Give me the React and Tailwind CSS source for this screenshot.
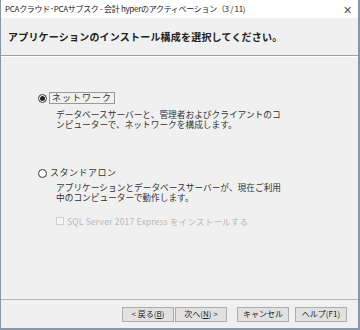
import React from "react";

const F = { fontFamily: '"Noto Sans CJK JP", "Noto Sans", sans-serif' };

function Btn({ children, className = "" }) {
  return (
    <div className={"h-[15px] border border-[#adadad] bg-[#e1e1e1] flex items-center justify-center text-[8px] text-[#222] " + className}>
      {children}
    </div>
  );
}

export default function App() {
  return (
    <div style={F} className="w-[360px] h-[330px] bg-[#f0f0f0] border-l border-r-2 border-b-2 border-[#8796a6] flex flex-col overflow-hidden">
      <div className="h-[18px] bg-white flex items-center justify-between pl-[4px] pr-[6px] shrink-0">
        <span className="text-[8px] text-[#222] tracking-[-0.3px]">PCAクラウド･PCAサブスク - 会計 hyperのアクティベーション（3 / 11)</span>
        <span className="text-[11px] text-[#555] leading-none">✕</span>
      </div>
      <div className="h-[37px] flex items-center pl-[7px] shrink-0">
        <span className="text-[10px] font-semibold text-[#222] tracking-[0.2px]">アプリケーションのインストール構成を選択してください。</span>
      </div>
      <div className="h-px bg-[#a0a0a0] shrink-0" />
      <div className="h-px bg-white shrink-0" />
      <div className="flex-1 flex flex-col pl-[37px]">
        <div className="mt-[34px] flex items-center h-[14px]">
          <div className="w-[9px] h-[9px] rounded-full border border-[#333] bg-white flex items-center justify-center">
            <div className="w-[5px] h-[5px] rounded-full bg-[#222]" />
          </div>
          <div className="ml-[2px] border border-[#999] px-[2px] h-[12px] flex items-center text-[9px] text-[#333] tracking-[1px]">ネットワーク</div>
        </div>
        <div className="ml-[18px] mt-[5px] text-[8.7px] leading-[10px] text-[#333] tracking-[0px]">
          <div>データベースサーバーと、管理者およびクライアントのコ</div>
          <div>ンピューターで、ネットワークを構成します。</div>
        </div>
        <div className="mt-[36px] flex items-center h-[14px]">
          <div className="w-[9px] h-[9px] rounded-full border border-[#333] bg-white" />
          <div className="ml-[3px] text-[9px] text-[#333] tracking-[0.5px]">スタンドアロン</div>
        </div>
        <div className="ml-[18px] mt-[3px] text-[8.7px] leading-[10px] text-[#333] tracking-[0px]">
          <div>アプリケーションとデータベースサーバーが、現在ご利用</div>
          <div>中のコンピューターで動作します。</div>
        </div>
        <div className="ml-[18px] mt-[12px] flex items-center h-[12px]">
          <div className="w-[8px] h-[8px] border border-[#cfcfcf] bg-[#f4f4f4]" />
          <div className="ml-[3px] text-[8.5px] text-[#b8b8b8] tracking-[0.2px]">SQL Server 2017 Express をインストールする</div>
        </div>
      </div>
      <div className="h-px bg-[#b8b8b8] shrink-0" />
      <div className="h-[28px] flex items-center justify-end pr-[11px] shrink-0">
        <Btn className="w-[52px]">&lt; 戻る(<u>B</u>)</Btn>
        <Btn className="w-[52px] ml-[1px]">次へ(<u>N</u>) &gt;</Btn>
        <Btn className="w-[52px] ml-[10px]">キャンセル</Btn>
        <Btn className="w-[52px] ml-[6px]">ヘルプ(F1)</Btn>
      </div>
    </div>
  );
}
